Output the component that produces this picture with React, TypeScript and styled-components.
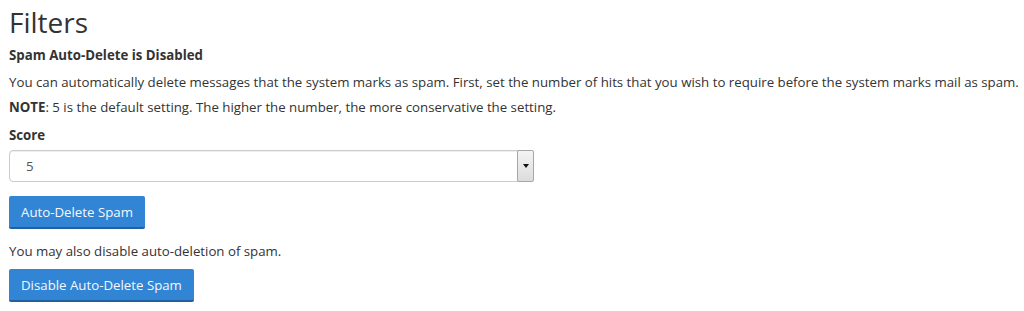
import React from "react";
import styled, { createGlobalStyle } from "styled-components";

const GlobalStyle = createGlobalStyle`
  html, body {
    margin: 0;
    padding: 0;
    background: #fff;
  }
  body {
    font-family: "Open Sans", "Liberation Sans", sans-serif;
    font-size: 13.25px;
    line-height: 19px;
    color: #333;
  }
`;

const Page = styled.div`
  padding: 0 0 0 9px;
`;

const Title = styled.h1`
  margin: 7px 0 0 0;
  font-size: 28px;
  font-weight: 400;
  line-height: 31px;
  color: #333;
`;

const Subtitle = styled.h2`
  margin: 8px 0 0 0;
  font-size: 13.25px;
  font-weight: 700;
  line-height: 19px;
`;

const Para = styled.p<{ $top: number }>`
  margin: ${({ $top }) => $top}px 0 0 0;
`;

const Label = styled.label`
  display: block;
  margin: 9px 0 5px 0;
  font-weight: 700;
`;

const SelectBox = styled.div`
  display: flex;
  align-items: stretch;
  width: 525px;
  height: 32px;
  box-sizing: border-box;
  border: 1px solid #ccc;
  border-radius: 4px;
  box-shadow: inset 0 1px 1px rgba(0, 0, 0, 0.075);
  background: #fff;
`;

const SelectValue = styled.span`
  flex: 1;
  padding-left: 16px;
  line-height: 30px;
  color: #555;
`;

const ArrowBox = styled.span`
  display: flex;
  align-items: center;
  justify-content: center;
  width: 15px;
  margin: -1px -1px -1px 0;
  border: 1px solid #a6a6a6;
  border-radius: 2px;
  background: linear-gradient(#f4f4f4, #dcdcdc);
`;

const Arrow = styled.span`
  width: 0;
  height: 0;
  border-left: 3.5px solid transparent;
  border-right: 3.5px solid transparent;
  border-top: 4px solid #111;
`;

const Button = styled.button<{ $top: number }>`
  display: block;
  margin: ${({ $top }) => $top}px 0 0 0;
  padding: 6px 12px 5px;
  height: 33px;
  box-sizing: border-box;
  font-family: inherit;
  font-size: 13.25px;
  line-height: 19px;
  color: #f4f8fc;
  background: #3284d4;
  border: 0;
  border-bottom: 2px solid #21609e;
  border-radius: 2px;
  cursor: pointer;
`;

export default function App() {
  return (
    <Page>
      <GlobalStyle />
      <Title>Filters</Title>
      <Subtitle>Spam Auto-Delete is Disabled</Subtitle>
      <Para $top={8}>
        You can automatically delete messages that the system marks as spam.
        First, set the number of hits that you wish to require before the
        system marks mail as spam.
      </Para>
      <Para $top={6}>
        <strong>NOTE</strong>: 5 is the default setting. The higher the number,
        the more conservative the setting.
      </Para>
      <Label>Score</Label>
      <SelectBox>
        <SelectValue>5</SelectValue>
        <ArrowBox>
          <Arrow />
        </ArrowBox>
      </SelectBox>
      <Button $top={14}>Auto-Delete Spam</Button>
      <Para $top={13}>You may also disable auto-deletion of spam.</Para>
      <Button $top={8}>Disable Auto-Delete Spam</Button>
    </Page>
  );
}
